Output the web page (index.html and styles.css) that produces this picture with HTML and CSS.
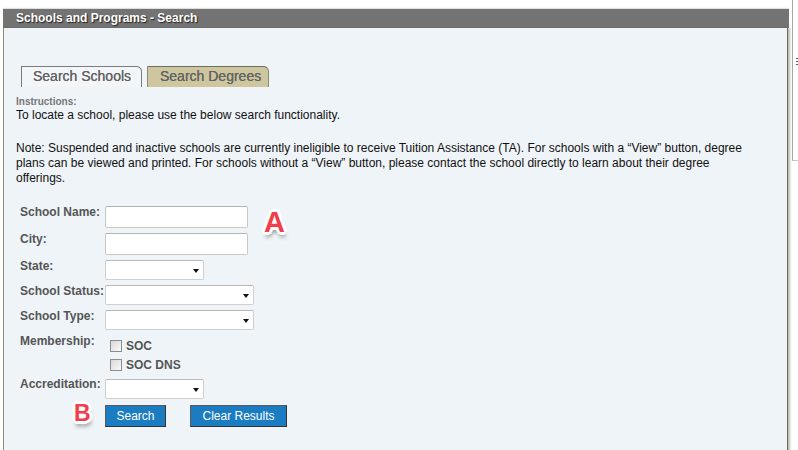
FILE: index.html
```html
<!DOCTYPE html>
<html lang="en">
	<head>
		<meta charset="utf-8">
		<title>Schools and Programs - Search</title>
		<link rel="stylesheet" href="styles.css">
	</head>
	<body>
		<div class="scrollbar"><span class="grip"></span></div>
		<div class="page">
			<div class="panel">
				<div class="panel-head">Schools and Programs - Search</div>
				<div class="panel-body">
					<div class="tabs">
						<span class="tab tab-active">Search Schools</span>
						<span class="tab tab-idle">Search Degrees</span>
					</div>

					<div class="instructions">
						<div class="instr-label">Instructions:</div>
						<p>To locate a school, please use the below search functionality.</p>
						<p>Note: Suspended and inactive schools are currently ineligible to receive Tuition Assistance (TA). For schools with a &ldquo;View&rdquo; button, degree plans can be viewed and printed. For schools without a &ldquo;View&rdquo; button, please contact the school directly to learn about their degree offerings.</p>
					</div>

					<form class="search-form">
						<label class="field-label">School Name:</label>
						<input class="text-input" type="text">

						<label class="field-label">City:</label>
						<input class="text-input" type="text">

						<label class="field-label">State:</label>
						<div class="select select-short"></div>

						<label class="field-label">School Status:</label>
						<div class="select select-long"></div>

						<label class="field-label">School Type:</label>
						<div class="select select-long"></div>

						<label class="field-label">Membership:</label>
						<div class="checks">
							<label class="check"><input type="checkbox"> SOC</label>
							<label class="check"><input type="checkbox"> SOC DNS</label>
						</div>

						<label class="field-label field-label-up">Accreditation:</label>
						<div class="select select-short"></div>

						<div class="buttons">
							<button type="button" class="btn btn-search">Search</button>
							<button type="button" class="btn btn-clear">Clear Results</button>
						</div>

						<!-- callout letters drawn over the form -->
						<span class="mark mark-a">A</span>
						<span class="mark mark-b">B</span>
					</form>
				</div>
			</div>
		</div>
	</body>
</html>
```

FILE: styles.css
```css
body {
	margin: 0;
	background-color: white;
	font-family: 'Liberation Sans', Arial, sans-serif;
	font-size: 12px;
	color: #111;
}

.page {
	padding: 9px 0 0 3px;
}

.panel {
	width: 786px;
}

.panel-head {
	height: 19px;
	line-height: 19px;
	padding-left: 13px;
	background-color: #737373;
	color: white;
	font-weight: bold;
	font-size: 12px;
	text-shadow: 1px 1px 1px #222;
	box-shadow: 0 -1px 1px rgba(0, 0, 0, 0.12);
}

.panel-body {
	margin-right: 1px;
	height: 403px;
	padding: 38px 28px 0 12px;
	background-color: #eff4f8;
	border-left: 1px solid #8e8c76;
	border-right: 1px solid #6b6a55;
	box-shadow: 2px 0 2px rgba(60, 60, 40, 0.35);
}

/* Tabs */

.tabs {
	display: flex;
	gap: 5px;
	margin-left: 5px;
}

.tab {
	box-sizing: border-box;
	height: 21px;
	line-height: 18px;
	font-size: 14px;
	color: #636363;
	text-shadow: 0 0 0.4px #636363;
	border: 1px solid #7c7c7c;
	border-bottom: 0 none;
	border-top-right-radius: 6px 5px;
}

.tab-active {
	width: 121px;
	padding-left: 11px;
	background-color: #f3f6f9;
}

.tab-idle {
	width: 122px;
	padding-left: 12px;
	background-color: #cec69f;
	border-color: #8c8a78;
	border-top-color: #6f6d5e;
}

/* Instructions */

.instructions {
	margin-top: 9px;
}

.instr-label {
	font-size: 10px;
	line-height: 12px;
	font-weight: bold;
	color: #777;
}

.instructions p {
	margin: 0 0 18px;
	line-height: 15px;
	color: #111;
}

/* Form */

.search-form {
	position: relative;
	display: grid;
	grid-template-columns: 85px auto;
	row-gap: 5px;
	justify-items: start;
	margin: 20px 0 0 4px;
}

.field-label {
	align-self: start;
	line-height: 13px;
	font-weight: bold;
	color: #555;
}

.field-label-up {
	margin-top: -1px;
}

.text-input {
	box-sizing: border-box;
	width: 143px;
	height: 22px;
	margin: 0;
	border: 1px solid #c9c9c9;
	border-top-color: #b4b4b4;
	border-radius: 2px;
	background-color: white;
}

.select {
	position: relative;
	box-sizing: border-box;
	height: 20px;
	border: 1px solid #cfcfcf;
	border-top-color: #b8b8b8;
	border-radius: 2px;
	background-color: white;
}

.select::after {
	content: '';
	position: absolute;
	right: 4px;
	top: 8px;
	border-style: solid;
	border-width: 4px 3.5px 0 3.5px;
	border-color: #111 transparent transparent transparent;
}

.select-short {
	width: 99px;
}

.select-long {
	width: 149px;
}

.checks {
	display: flex;
	flex-direction: column;
	gap: 5px;
	padding: 4px 0 2px 5px;
}

.check {
	display: flex;
	align-items: center;
	gap: 4px;
	height: 14px;
	font-weight: bold;
	color: #555;
}

.check input {
	appearance: none;
	box-sizing: border-box;
	width: 12px;
	height: 12px;
	margin: 0;
	border: 1px solid #8c8c8c;
	background-image: linear-gradient(to bottom right, #d8d8d8, #fbfbfb);
}

.buttons {
	grid-column: 2;
	display: flex;
	gap: 24px;
	margin-top: 1px;
}

.btn {
	box-sizing: border-box;
	height: 22px;
	margin: 0;
	padding: 0;
	font-family: 'Liberation Sans', Arial, sans-serif;
	font-size: 12px;
	color: white;
	background-color: #1b7cc1;
	border: 1px solid #5a5a5a;
	border-right-color: #333;
	border-bottom-color: #333;
}

.btn-search {
	width: 61px;
}

.btn-clear {
	width: 97px;
}

/* Callout letters */

.mark {
	position: absolute;
	line-height: 1;
	font-weight: bold;
	color: #f23d4b;
	text-shadow:
		2px 0 0 #fff, -2px 0 0 #fff, 0 2px 0 #fff, 0 -2px 0 #fff,
		2px 2px 0 #fff, -2px -2px 0 #fff, 2px -2px 0 #fff, -2px 2px 0 #fff,
		3px 0 0 #fff, -3px 0 0 #fff, 0 3px 0 #fff, 0 -3px 0 #fff,
		1px 5px 4px rgba(0, 0, 0, 0.45);
}

.mark-a {
	left: 244px;
	top: 2px;
	font-size: 29px;
}

.mark-b {
	left: 54px;
	top: 196px;
	font-size: 23px;
}

/* Window scrollbar edge */

.scrollbar {
	position: absolute;
	left: 792px;
	top: 0;
	width: 6px;
	height: 160px;
	border-left: 1px solid #a8a8a8;
	border-bottom: 1px solid #c8c8c8;
}

.grip {
	position: absolute;
	left: 3px;
	top: 58px;
	width: 3px;
	height: 7px;
	background-image: repeating-linear-gradient(to bottom, #555 0, #555 1px, transparent 1px, transparent 3px);
}
```
